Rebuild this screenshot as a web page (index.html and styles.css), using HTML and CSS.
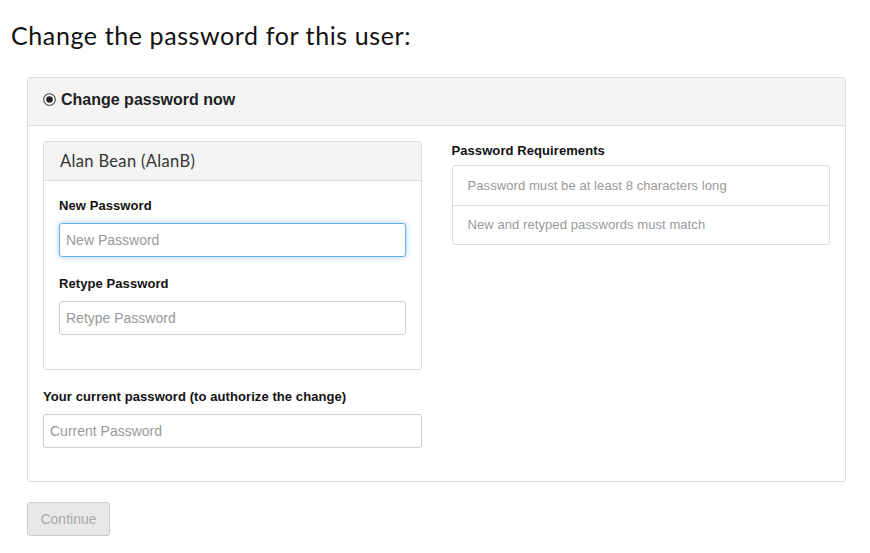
FILE: index.html
```html
<!DOCTYPE html>
<html lang="en">
<head>
  <meta charset="UTF-8">
  <title>Change Password</title>
  <link rel="stylesheet" href="styles.css">
</head>
<body>
  <h1 class="page-title">Change the password for this user:</h1>

  <div class="main">
    <div class="panel">
      <div class="panel-heading">
        <svg class="radio" width="13" height="13" viewBox="0 0 13 13">
          <circle cx="6.5" cy="6.5" r="5.8" fill="#fff" stroke="#444" stroke-width="1.1"/>
          <circle cx="6.5" cy="6.5" r="3.3" fill="#222"/>
        </svg>
        Change password now
      </div>
      <div class="panel-body">
        <div class="row">
          <div class="col">
            <div class="panel inner">
              <div class="panel-heading user-name">Alan Bean (AlanB)</div>
              <div class="panel-body">
                <div class="form-group">
                  <label>New Password</label>
                  <input type="password" class="form-control focused" placeholder="New Password">
                </div>
                <div class="form-group">
                  <label>Retype Password</label>
                  <input type="password" class="form-control" placeholder="Retype Password">
                </div>
              </div>
            </div>
            <div class="form-group last">
              <label>Your current password (to authorize the change)</label>
              <input type="password" class="form-control" placeholder="Current Password">
            </div>
          </div>
          <div class="col">
            <label>Password Requirements</label>
            <ul class="list-group">
              <li>Password must be at least 8 characters long</li>
              <li>New and retyped passwords must match</li>
            </ul>
          </div>
        </div>
      </div>
    </div>

    <button class="btn" disabled>Continue</button>
  </div>
</body>
</html>
```

FILE: styles.css
```css
body {
  margin: 0;
  font-family: 'Liberation Sans', Arial, sans-serif;
  font-size: 14px;
  line-height: 20px;
  color: #333;
  background: #fff;
}
.page-title {
  margin: 20px 0 27px 11px;
  font-family: 'Lato', 'Open Sans', sans-serif;
  font-weight: 400;
  font-size: 25px;
  line-height: 30px;
  letter-spacing: 0.6px;
  color: #111;
}
.main {
  margin: 0 24px 0 27px;
}
.panel {
  border: 1px solid #ddd;
  border-radius: 3px;
  background: #fff;
}
.panel-heading {
  display: flex;
  align-items: center;
  gap: 5px;
  height: 48px;
  box-sizing: border-box;
  padding: 0 15px 4px;
  background: #f4f4f4;
  border-bottom: 1px solid #ddd;
  font-size: 16px;
  font-weight: bold;
  color: #222;
}
.panel-body {
  padding: 15px;
}
.row {
  display: grid;
  grid-template-columns: 1fr 1fr;
  gap: 30px;
}
.inner {
  margin-bottom: 17px;
}
.inner .panel-heading {
  height: 39px;
  padding: 0 16px;
  font-family: 'Lato', 'Open Sans', sans-serif;
  font-weight: 400;
  font-size: 16.5px;
  letter-spacing: 0.35px;
  color: #333;
}
.inner .panel-body {
  padding: 15px 15px 17px;
}
label {
  display: block;
  margin-bottom: 7px;
  font-size: 13px;
  font-weight: bold;
  letter-spacing: 0.08px;
  color: #111;
}
.form-group {
  margin-bottom: 17px;
}
.form-group.last {
  margin-bottom: 18px;
}
.form-control {
  display: block;
  width: 100%;
  height: 34px;
  box-sizing: border-box;
  padding: 6px;
  border: 1px solid #ccc;
  border-radius: 3px;
  font-family: inherit;
  font-size: 14px;
  color: #555;
}
.form-control::placeholder {
  color: #999;
}
.form-control.focused {
  border-color: #66afe9;
  box-shadow: 0 0 6px rgba(102, 175, 233, 0.6);
}
.list-group {
  list-style: none;
  margin: -3px 0 0;
  padding: 0;
  border: 1px solid #ddd;
  border-radius: 3px;
}
.list-group li {
  padding: 10px 15px 9px;
  font-size: 13px;
  letter-spacing: 0.08px;
  color: #999;
}
.list-group li + li {
  padding-top: 9px;
  border-top: 1px solid #ddd;
}
.btn {
  margin-top: 20px;
  width: 83px;
  height: 34px;
  padding: 0;
  background: #e8e8e8;
  border: 1px solid #ccc;
  border-radius: 3px;
  font-family: inherit;
  font-size: 14px;
  color: #aaa;
}
```
